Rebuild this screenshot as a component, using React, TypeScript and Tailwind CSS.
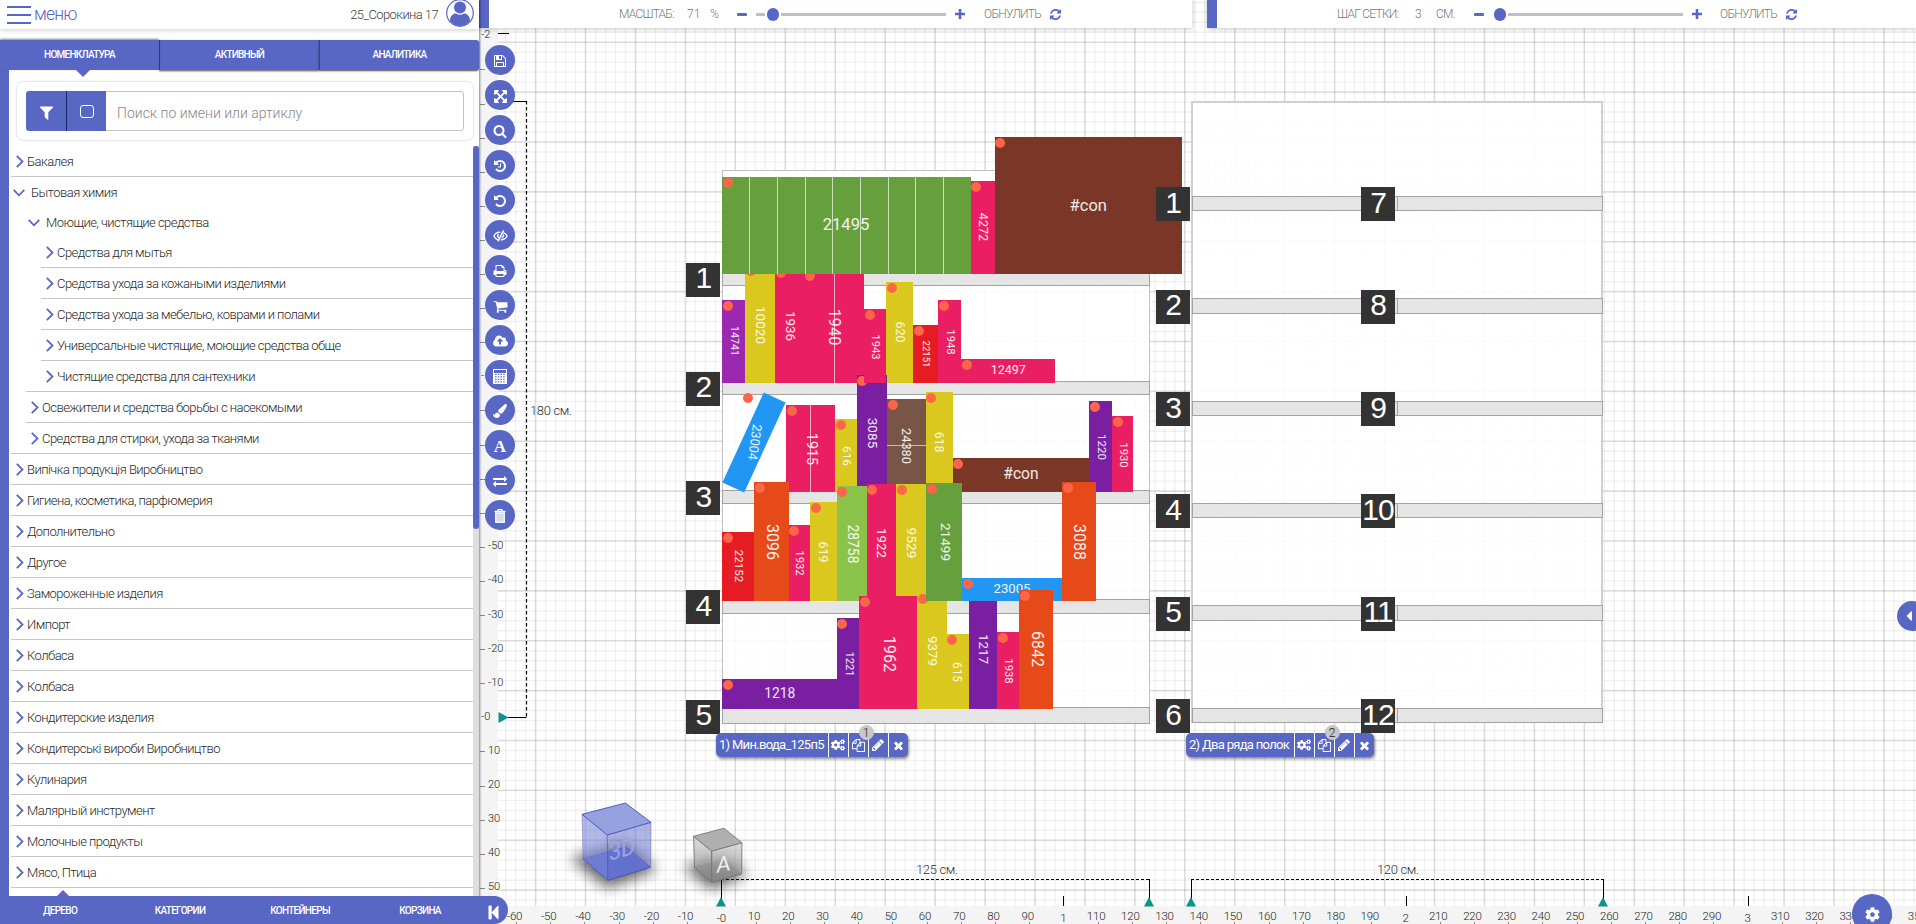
import React from "react";
import { FaCogs, FaPaintBrush, FaCog, FaCaretLeft } from "react-icons/fa";

type IconProps = { d: string; size?: number; vb?: string };
const Icon = ({ d, size = 14, vb = "0 0 1792 1792" }: IconProps) => (
  <svg width={size} height={size} viewBox={vb} fill="currentColor" className="shrink-0">
    <path d={d} />
  </svg>
);

const UNDO =
  "M1664 896q0 156-61 298t-164 245-245 164-298 61q-172 0-327-72.5t-264-204.5q-7-10-6.5-22.5t8.5-20.5l137-138q10-9 25-9 16 2 23 12 73 95 179 147t225 52q104 0 198.5-40.5t163.5-109.5 109.5-163.5 40.5-198.5-40.5-198.5-109.5-163.5-163.5-109.5-198.5-40.5q-98 0-188 35.5t-160 101.5l137 138q31 30 14 69-17 40-59 40h-448q-26 0-45-19t-19-45v-448q0-42 40-59 39-17 69 14l130 129q107-101 244.5-156.5t284.5-55.5q156 0 298 61t245 164 164 245 61 298z";
const P = {
  save: "M512 1536h768v-384h-768v384zm896 0h128v-896q0-14-10-38.5t-20-34.5l-281-281q-10-10-34-20t-39-10v416q0 40-28 68t-68 28h-576q-40 0-68-28t-28-68v-416h-128v1280h128v-416q0-40 28-68t68-28h832q40 0 68 28t28 68v416zm-384-928v-320q0-13-9.5-22.5t-22.5-9.5h-192q-13 0-22.5 9.5t-9.5 22.5v320q0 13 9.5 22.5t22.5 9.5h192q13 0 22.5-9.5t9.5-22.5zm640 32v928q0 40-28 68t-68 28h-1344q-40 0-68-28t-28-68v-1344q0-40 28-68t68-28h928q40 0 88 20t76 48l280 280q28 28 48 76t20 88z",
  arrows: "M1411 541l-355 355 355 355 144-144q29-31 70-14 39 17 39 59v448q0 26-19 45t-45 19h-448q-42 0-59-40-17-39 14-69l144-144-355-355-355 355 144 144q31 30 14 69-17 40-59 40h-448q-26 0-45-19t-19-45v-448q0-42 40-59 39-17 69 14l144 144 355-355-355-355-144 144q-19 19-45 19-12 0-24-5-40-17-40-59v-448q0-26 19-45t45-19h448q42 0 59 40 17 39-14 69l-144 144 355 355 355-355-144-144q-31-30-14-69 17-40 59-40h448q26 0 45 19t19 45v448q0 42-39 59-13 5-25 5-26 0-45-19z",
  search: "M1216 832q0-185-131.5-316.5t-316.5-131.5-316.5 131.5-131.5 316.5 131.5 316.5 316.5 131.5 316.5-131.5 131.5-316.5zm512 832q0 52-38 90t-90 38q-54 0-90-38l-343-342q-179 124-399 124-143 0-273.5-55.5t-225-150-150-225-55.5-273.5 55.5-273.5 150-225 225-150 273.5-55.5 273.5 55.5 225 150 150 225 55.5 273.5q0 220-124 399l343 343q37 37 37 90z",
  undo: UNDO,
  history: UNDO + "M1024 608v448q0 14-9 23t-23 9h-320q-14 0-23-9t-9-23v-64q0-14 9-23t23-9h224v-352q0-14 9-23t23-9h64q14 0 23 9t9 23z",
  print: "M448 1536h896v-256h-896v256zm0-640h896v-384h-160q-40 0-68-28t-28-68v-160h-640v640zm1152 64q0-26-19-45t-45-19-45 19-19 45 19 45 45 19 45-19 19-45zm128 0v416q0 13-9.5 22.5t-22.5 9.5h-224v160q0 40-28 68t-68 28h-960q-40 0-68-28t-28-68v-160h-224q-13 0-22.5-9.5t-9.5-22.5v-416q0-79 56.5-135.5t135.5-56.5h64v-544q0-40 28-68t68-28h672q40 0 88 20t76 48l152 152q28 28 48 76t20 88v256h64q79 0 135.5 56.5t56.5 135.5z",
  cart: "M704 1536q0 52-38 90t-90 38-90-38-38-90 38-90 90-38 90 38 38 90zm896 0q0 52-38 90t-90 38-90-38-38-90 38-90 90-38 90 38 38 90zm128-1088v512q0 24-16.5 42.5t-40.5 21.5l-1044 122q13 60 13 70 0 16-24 64h920q26 0 45 19t19 45-19 45-45 19h-1024q-26 0-45-19t-19-45q0-11 8-31.5t16-36 21.5-40 15.5-29.5l-177-823h-204q-26 0-45-19t-19-45 19-45 45-19h256q16 0 28.5 6.5t19.5 15.5 13 24.5 8 26 5.5 29.5 4.5 26h1201q26 0 45 19t19 45z",
  cloud: "M1280 864q0-14-9-23l-352-352q-9-9-23-9t-23 9l-351 351q-10 12-10 24 0 14 9 23t23 9h224v352q0 13 9.5 22.5t22.5 9.5h192q13 0 22.5-9.5t9.5-22.5v-352h224q13 0 22.5-9.5t9.5-22.5zm640 288q0 159-112.5 271.5t-271.5 112.5h-1088q-185 0-316.5-131.5t-131.5-316.5q0-130 70-240t188-165q-2-30-2-43 0-212 150-362t362-150q156 0 285.5 87t188.5 231q71-62 166-62 106 0 181 75t75 181q0 76-41 138 130 31 213.5 135.5t83.5 238.5z",
  exchange: "M1792 1184v192q0 13-9.5 22.5t-22.5 9.5h-1376v192q0 13-9.5 22.5t-22.5 9.5q-12 0-24-10l-319-320q-9-9-9-22 0-14 9-23l320-320q9-9 23-9 13 0 22.5 9.5t9.5 22.5v192h1376q13 0 22.5 9.5t9.5 22.5zm0-544q0 14-9 23l-320 320q-9 9-23 9-13 0-22.5-9.5t-9.5-22.5v-192h-1376q-13 0-22.5-9.5t-9.5-22.5v-192q0-13 9.5-22.5t22.5-9.5h1376v-192q0-14 9-23t23-9q12 0 24 10l319 319q9 9 9 23z",
  filter: "M1595 295q17 41-14 70l-493 493v742q0 42-39 59-13 5-25 5-27 0-45-19l-256-256q-19-19-19-45v-486l-493-493q-31-29-14-70 17-39 59-39h1280q42 0 59 39z",
  refresh: "M1639 1056q0 5-1 7-64 268-268 434.5t-478 166.5q-146 0-282.5-55t-243.5-157l-129 129q-19 19-45 19t-45-19-19-45v-448q0-26 19-45t45-19h448q26 0 45 19t19 45-19 45l-137 137q71 66 161 102t187 36q134 0 250-65t186-179q11-17 53-117 8-23 30-23h192q13 0 22.5 9.5t9.5 22.5zm25-800v448q0 26-19 45t-45 19h-448q-26 0-45-19t-19-45 19-45l138-138q-148-137-349-137-134 0-250 65t-186 179q-11 17-53 117-8 23-30 23h-199q-13 0-22.5-9.5t-9.5-22.5v-7q65-268 270-434.5t480-166.5q146 0 284 55.5t245 156.5l130-129q19-19 45-19t45 19 19 45z",
  pencil: "M491 1536l91-91-235-235-91 91v107h128v128h107zm523-928q0-22-22-22-10 0-17 7l-542 542q-7 7-7 17 0 22 22 22 10 0 17-7l542-542q7-7 7-17zm-54-192l416 416-832 832h-416v-416zm683 96q0 53-37 90l-166 166-416-416 166-165q36-38 90-38 53 0 91 38l235 234q37 39 37 91z",
  times: "M1490 1322q0 40-28 68l-136 136q-28 28-68 28t-68-28l-294-294-294 294q-28 28-68 28t-68-28l-136-136q-28-28-28-68t28-68l294-294-294-294q-28-28-28-68t28-68l136-136q28-28 68-28t68 28l294 294 294-294q28-28 68-28t68 28l136 136q28 28 28 68t-28 68l-294 294 294 294q28 28 28 68z",
  copy: "M1696 384q40 0 68 28t28 68v1216q0 40-28 68t-68 28h-960q-40 0-68-28t-28-68v-288h-544q-40 0-68-28t-28-68v-672q0-40 20-88t48-76l408-408q28-28 76-48t88-20h416q40 0 68 28t28 68v328q68-40 128-40h416zm-544 213l-299 299h299v-299zm-640-384l-299 299h299v-299zm196 647l316-316v-416h-384v416q0 40-28 68t-68 28h-416v640h512v-256q0-40 20-88t48-76zm956 804v-1152h-384v416q0 40-28 68t-68 28h-416v640h896z",
};

const CalculatorIcon = () => (
  <svg width="14" height="15" viewBox="0 0 14 15">
    <rect x="0.5" y="0.5" width="13" height="14" fill="none" stroke="#fff" />
    <rect x="1" y="4" width="12" height="10" fill="#fff" />
    {[4.8, 7.3, 9.8, 12.3].map((y) =>
      [2, 4.7, 7.4, 10.1].map((x) => <rect key={`${x}-${y}`} x={x} y={y} width="1.6" height="1.1" fill="#5867c3" />)
    )}
  </svg>
);

const EyeIcon = () => (
  <svg width="15" height="12" viewBox="0 0 15 12" fill="none" stroke="#fff" strokeWidth="1.3" strokeLinecap="round">
    <path d="M6.8 2.2C3.800 2.300 1.800 4.200 0.900 6C1.500 7.500 2.800 8.900 4.600 9.700" />
    <path d="M10.800 2.800C12.500 3.600 13.600 4.900 14.100 6C13.200 7.900 11 9.800 8 9.900" />
    <path d="M10.200 0.900L5.200 11" strokeWidth="1.500" />
    <path d="M5.200 4.200C4.400 5.500 4.700 6.800 5.600 7.600M10.300 4.800C10.500 6.200 9.900 7.200 9.100 7.800" />
  </svg>
);

const TrashIcon = () => (
  <svg width="12" height="14" viewBox="0 0 12 14">
    <path d="M4 2V0.700H8V2" fill="none" stroke="#fff" strokeWidth="1.200" />
    <rect x="0.500" y="1.800" width="11" height="1.700" fill="#fff" />
    <rect x="1.700" y="4" width="8.600" height="9.300" fill="#d5d9f1" stroke="#fff" strokeWidth="1.200" />
  </svg>
);

const Header = () => (
  <header className="relative flex h-[29px] w-[479px] shrink-0 items-center justify-between bg-white pr-[5px] pl-[7px] shadow-[0_1px_5px_rgba(0,0,0,0.2)]">
    <div className="flex items-center gap-[3px]">
      <span className="flex w-6 flex-col gap-[6px]">
        <i className="h-[2px] bg-[#5867c3]" />
        <i className="h-[2px] bg-[#5867c3]" />
        <i className="h-[2px] bg-[#5867c3]" />
      </span>
      <span className="pb-px text-[17.500px] leading-[24px] font-light tracking-[-0.8px] text-[#5867c3]">меню</span>
    </div>
    <div className="flex items-center gap-[8px]">
      <span className="text-[13px] font-light tracking-[-0.6px] text-[#444]">25_Сорокина 17</span>
      <svg width="28" height="28" viewBox="0 0 28 28" className="-mt-1">
        <circle cx="14" cy="14" r="13.300" fill="#fff" stroke="#5867c3" strokeWidth="1.200" />
        <circle cx="14" cy="8.500" r="6" fill="#5867c3" />
        <path d="M4 22C4 16 8 14.500 10 14.500Q14 17 18 14.500C21 14.500 24 17 24 22Q20 27 14 27Q8 27 4 22Z" fill="#5867c3" />
      </svg>
    </div>
  </header>
);

const Tabs = () => (
  <nav className="relative mt-[11px] flex h-[30px] shrink-0 text-[10px] font-medium tracking-[-0.75px] text-white">
    <div className="relative flex flex-1 items-center justify-center bg-[#5867c3] pb-px shadow-[0_-1px_2px_rgba(0,0,0,0.5)]">
      НОМЕНКЛАТУРА
      <i className="absolute top-[30px] left-[76px] h-0 w-0 border-x-[7px] border-t-[7px] border-x-transparent border-t-[#5867c3]" />
    </div>
    <div className="flex flex-1 items-center justify-center border-l border-[#38448f] bg-[#5867c3] pb-px shadow-[0_1px_2px_rgba(0,0,0,0.7)]">АКТИВНЫЙ</div>
    <div className="flex flex-1 items-center justify-center rounded-r-[3px] border-l border-[#38448f] bg-[#5867c3] pb-px shadow-[0_1px_2px_rgba(0,0,0,0.7)]">АНАЛИТИКА</div>
  </nav>
);

const Search = () => (
  <div className="mt-[11px] ml-[7px] mr-[5px] shrink-0 rounded-lg border border-[#e8e8e8] p-[9px] shadow-[0_0_3px_rgba(0,0,0,0.08)]">
    <div className="flex h-10 overflow-hidden rounded-[3px]">
      <div className="flex w-[41px] items-center justify-center border-r border-[#1b2566] bg-[#5867c3] pt-[3px] text-white">
        <Icon d={P.filter} size={17} />
      </div>
      <div className="flex w-[39px] items-center justify-center bg-[#5867c3]">
        <i className="h-[13px] w-[14px] rounded-[3px] border-[1.5px] border-white" />
      </div>
      <div className="flex flex-1 items-center rounded-r-[3px] border border-l-0 border-[#c4c4c4] pt-1 pl-[11px] text-[14px] font-light text-[#888]">
        Поиск по имени или артиклу
      </div>
    </div>
  </div>
);

type Row = { t: string; l: 0 | 1 | 2; open?: boolean; lineAt?: 0 | 1 | 2 };
const ROWS: Row[] = [
  { t: "Бакалея", l: 0 },
  { t: "Бытовая химия", l: 0, open: true },
  { t: "Моющие, чистящие средства", l: 1, open: true },
  { t: "Средства для мытья", l: 2 },
  { t: "Средства ухода за кожаными изделиями", l: 2 },
  { t: "Средства ухода за мебелью, коврами и полами", l: 2 },
  { t: "Универсальные чистящие, моющие средства обще", l: 2 },
  { t: "Чистящие средства для сантехники", l: 2, lineAt: 1 },
  { t: "Освежители и средства борьбы с насекомыми", l: 1 },
  { t: "Средства для стирки, ухода за тканями", l: 1, lineAt: 0 },
  { t: "Випічка продукція Виробництво", l: 0 },
  { t: "Гигиена, косметика, парфюмерия", l: 0 },
  { t: "Дополнительно", l: 0 },
  { t: "Другое", l: 0 },
  { t: "Замороженные изделия", l: 0 },
  { t: "Импорт", l: 0 },
  { t: "Колбаса", l: 0 },
  { t: "Колбаса", l: 0 },
  { t: "Кондитерские изделия", l: 0 },
  { t: "Кондитерські вироби Виробництво", l: 0 },
  { t: "Кулинария", l: 0 },
  { t: "Малярный инструмент", l: 0 },
  { t: "Молочные продукты", l: 0 },
  { t: "Мясо, Птица", l: 0 },
];
const LINE_PAD = ["pl-0", "pl-[15px]", "pl-[30px]"];

const Tree = () => (
  <div className="mt-[5px] ml-[2px] flex min-h-0 flex-1">
    <ul className="flex min-w-0 flex-1 flex-col overflow-hidden">
      {ROWS.map((r, i) => (
        <li key={i} className={LINE_PAD[r.lineAt ?? r.l]}>
          <div className={r.open ? "h-[30px]" : "h-[31px] border-b border-[#c6c6c6]"}>
            <div className={`flex h-[31px] items-center whitespace-nowrap ${r.lineAt !== undefined ? "ml-[15px]" : "ml-0"}`}>
              {r.open ? (
                <svg width="12" height="8" viewBox="0 0 12 8" fill="none" stroke="#5867c3" strokeWidth="1.800" className="mr-[6px] ml-[2px]">
                  <path d="M0.700 0.800L6 6.300L11.300 0.800" />
                </svg>
              ) : (
                <svg width="8" height="13" viewBox="0 0 8 13" fill="none" stroke="#5867c3" strokeWidth="1.800" className="mr-[3px] ml-[5px]">
                  <path d="M0.800 0.800L6.500 6.500L0.800 12.200" />
                </svg>
              )}
              <span className="text-[13px] font-light tracking-[-0.54px] text-[#2a2a2a]">{r.t}</span>
            </div>
          </div>
        </li>
      ))}
    </ul>
    <div className="h-full w-[6px] shrink-0 bg-[#dedede]">
      <div className="h-[383px] rounded-[3px] bg-[#5867c3]" />
    </div>
  </div>
);

const Sidebar = () => (
  <aside className="relative z-10 flex w-[479px] shrink-0 flex-col bg-white shadow-[1px_0_2px_rgba(0,0,0,0.45)]">
    <Header />
    <Tabs />
    <div className="flex min-h-0 flex-1 flex-col border-l-[9px] border-[#5867c3]">
      <Search />
      <Tree />
    </div>
    <footer className="relative flex h-7 w-[508px] shrink-0 items-center rounded-r-[14px] bg-[#5867c3] text-[10px] font-medium tracking-[-0.7px] text-white">
      <i className="absolute -top-[6px] left-[57px] h-0 w-0 border-x-[6px] border-b-[6px] border-x-transparent border-b-[#5867c3]" />
      {["ДЕРЕВО", "КАТЕГОРИИ", "КОНТЕЙНЕРЫ", "КОРЗИНА"].map((t) => (
        <span key={t} className="w-[120px] text-center">{t}</span>
      ))}
      <svg width="11" height="15" viewBox="0 0 11 15" fill="#fff" className="mt-1 ml-2">
        <rect x="0.500" y="0.500" width="3.200" height="14" rx="1" />
        <path d="M10.500 1.200V13.800Q10.300 14.800 9.500 14L3.500 7.500L9.500 1Q10.300 0.200 10.500 1.200Z" />
      </svg>
    </footer>
  </aside>
);

const Thumb = ({ lead }: { lead: number }) => (
  <div className="flex h-4 items-center gap-[2px]">
    {lead > 0 && <i className="h-[3px] w-[9px] bg-[#bdc1c6]" />}
    <i className="h-[13px] w-[12px] rounded-full bg-[#5867c3]" />
  </div>
);
const Minus = () => <i className="h-[3px] w-[10px] rounded-[1px] bg-[#5867c3]" />;
const Plus = () => (
  <svg width="10" height="10" viewBox="0 0 10 10" stroke="#5867c3" strokeWidth="2.600">
    <path d="M5 0V10M0 5H10" />
  </svg>
);

const TopBars = () => (
  <div className="absolute top-0 left-[479px] flex h-[28px] w-[1437px] gap-[15px] text-[12px] leading-none font-light tracking-[-0.75px] text-[#777]">
    <div className="flex w-[713px] items-center border-l-[10px] border-[#5867c3] bg-white shadow-[0_1px_5px_rgba(0,0,0,0.22)]">
      <span className="ml-[130px] w-[68px]">МАСШТАБ:</span>
      <span className="w-[23px] tracking-normal">71</span>
      <span className="w-[27px]">%</span>
      <Minus />
      <div className="ml-[9px] flex items-center gap-[2px]">
        <Thumb lead={9} />
        <i className="h-[3px] w-[165px] bg-[#bdc1c6]" />
      </div>
      <div className="ml-[9px]"><Plus /></div>
      <span className="ml-[19px] w-[65px]">ОБНУЛИТЬ</span>
      <span className="text-[#5867c3]"><Icon d={P.refresh} size={13} /></span>
    </div>
    <div className="flex flex-1 items-center border-l-[10px] border-[#5867c3] bg-white shadow-[0_1px_5px_rgba(0,0,0,0.22)]">
      <span className="ml-[120px] w-[78px]">ШАГ СЕТКИ:</span>
      <span className="w-[21px]">3</span>
      <span className="w-[38px]">СМ.</span>
      <Minus />
      <div className="ml-[10px] flex items-center gap-[2px]">
        <Thumb lead={0} />
        <i className="h-[3px] w-[175px] bg-[#bdc1c6]" />
      </div>
      <div className="ml-[9px]"><Plus /></div>
      <span className="ml-[18px] w-[65px]">ОБНУЛИТЬ</span>
      <span className="text-[#5867c3]"><Icon d={P.refresh} size={13} /></span>
    </div>
  </div>
);

const TOOLS: React.ReactNode[] = [
  <Icon d={P.save} />,
  <Icon d={P.arrows} size={15} />,
  <Icon d={P.search} />,
  <Icon d={P.history} />,
  <Icon d={P.undo} />,
  <EyeIcon />,
  <Icon d={P.print} />,
  <Icon d={P.cart} size={15} />,
  <Icon d={P.cloud} vb="0 0 1920 1792" size={15} />,
  <CalculatorIcon />,
  <FaPaintBrush size={14} />,
  <span className="font-['Liberation_Serif',serif] text-[17px] leading-none font-bold">A</span>,
  <Icon d={P.exchange} />,
  <TrashIcon />,
];

const Tools = () => (
  <div className="absolute top-[45px] left-[485px] z-20 flex flex-col gap-[5px]">
    {TOOLS.map((t, i) => (
      <div key={i} className="flex h-[30px] w-[30px] items-center justify-center rounded-full bg-[#5867c3] pt-[2px] text-white">{t}</div>
    ))}
  </div>
);

/* --- drawing surface ------------------------------------------------ */

const GX = 49.94;
const GY = 49.88;
const range = (a: number, b: number) => Array.from({ length: b - a + 1 }, (_, i) => a + i);

const Grid = () => (
  <svg className="absolute top-0 left-0" width="1916" height="924" shapeRendering="auto">
    {range(-3, 138).map((i) => {
      const x = 535.600 + (i * GX) / 5;
      return <line key={`a${i}`} x1={x} x2={x} y1="0" y2="906" stroke="#000" strokeOpacity="0.055" strokeWidth="1.400" />;
    })}
    {range(-4, 86).map((i) => {
      const y = 42.200 + (i * GY) / 5;
      return <line key={`b${i}`} y1={y} y2={y} x1="498" x2="1916" stroke="#000" strokeOpacity="0.055" strokeWidth="1.400" />;
    })}
    {range(0, 27).map((i) => {
      const x = 535.600 + i * GX;
      return <line key={`c${i}`} x1={x} x2={x} y1="0" y2="906" stroke="#000" strokeOpacity="0.090" strokeWidth="1.600" />;
    })}
    {range(0, 17).map((i) => {
      const y = 42.200 + i * GY;
      return <line key={`d${i}`} y1={y} y2={y} x1="498" x2="1916" stroke="#000" strokeOpacity="0.090" strokeWidth="1.600" />;
    })}
  </svg>
);

const Rulers = () => (
  <>
    <div className="absolute top-0 left-[479px] h-[924px] w-[19px] bg-[#f4f4f4]" />
    <div className="absolute top-[906px] left-[479px] h-[18px] w-[1437px] bg-[#f4f4f4]" />
    {range(-20, 5).map((k) => {
      const y = 717.300 + k * 34.100;
      const big = k % 10 === 0;
      const label = k === -20 ? "-2" : k === -10 ? "-" : k === 0 ? "-0" : String(k * 10);
      return (
        <React.Fragment key={k}>
          {!big && <i className="absolute left-[480px] h-px w-[5px] bg-[#888]" style={{ top: y }} />}
          {(big || k >= -5) && (
            <span className="absolute text-[11px] leading-[14px] font-light text-[#222]" style={{ top: y - 7.500, left: big ? 481 : 488 }}>
              {label}
            </span>
          )}
        </React.Fragment>
      );
    })}
    <i className="absolute top-[33px] left-[498px] h-px w-[11px] bg-black" />
    {range(-6, 35).map((k) => {
      const x = 721.300 + k * 34.210;
      const big = k % 10 === 0;
      const label = k === 0 ? "-0" : big ? String(k / 10) : String(k * 10);
      return (
        <React.Fragment key={k}>
          {!big && <i className="absolute top-[922px] h-[2px] w-px bg-[#888]" style={{ left: x }} />}
          {big && k > 0 && <i className="absolute top-[896px] h-[10px] w-px bg-black" style={{ left: x }} />}
          <span
            className="absolute w-10 text-center text-[11.500px] leading-[14px] font-light tracking-[-0.2px] text-[#222]"
            style={{ top: big ? 911 : 909, left: x - (big ? 20 : 21.500) }}
          >
            {label}
          </span>
        </React.Fragment>
      );
    })}
  </>
);

const Dims = () => (
  <>
    <svg className="absolute top-0 left-0" width="1916" height="924" fill="none" stroke="#000">
      <path d="M498 101.500H526.500" />
      <path d="M526.500 101V717" strokeDasharray="3.500 2.500" strokeWidth="1.200" />
      <path d="M504 717.500H526.500" />
      <path d="M721.500 900V879.500M1149.500 879V900M1191.500 900V879M1603.500 879V900" />
      <path d="M721 879.500H1149.500M1191 879.500H1603.500" strokeDasharray="3 2" strokeWidth="1.200" />
      <g fill="#0d9488" stroke="none">
        <path d="M498.500 712L508.500 717.500L498.500 723Z" />
        <path d="M716 906.500L721 897L726 906.500Z" />
        <path d="M1144 906.500L1149 897L1154 906.500Z" />
        <path d="M1186 906.500L1191 897L1196 906.500Z" />
        <path d="M1598 906.500L1603 897L1608 906.500Z" />
      </g>
    </svg>
    <span className="absolute top-[402px] left-[530px] text-[13px] leading-[18px] font-light tracking-[-0.35px] text-[#333]">180 см.</span>
    <span className="absolute top-[861px] left-[916px] text-[13px] leading-[18px] font-light tracking-[-0.35px] text-[#333]">125 см.</span>
    <span className="absolute top-[861px] left-[1377px] text-[13px] leading-[18px] font-light tracking-[-0.35px] text-[#333]">120 см.</span>
  </>
);

const Shelf = ({ x, y, w, h }: { x: number; y: number; w: number; h: number }) => (
  <div className="absolute border border-[#a2a2a2] bg-[#e5e5e5]" style={{ left: x, top: y, width: w, height: h }} />
);
const Num = ({ x, y, n }: { x: number; y: number; n: number }) => (
  <div
    className="absolute flex h-[34px] w-[34px] items-center justify-center bg-[#333] pb-[3px] font-['Liberation_Sans',sans-serif] text-[30px] leading-none tracking-[-1px] text-white"
    style={{ left: x, top: y }}
  >
    {n}
  </div>
);

const PINK = "#ea1e63", YEL = "#dac81e", PUR = "#7b1fa2", LIL = "#9c27b0", GRN = "#66a03c", BRN = "#7a3626";
const RED = "#e51c23", ORG = "#e64a19", BLU = "#2196f3", LIM = "#8bc34a", TAU = "#795548";

type Box = { n: string; c: string; x: number; y: number; r: number; b: number; tx: number; ty: number; s: number; v?: boolean; div?: number[]; hdiv?: number };
const box = (n: string, c: string, x: number, y: number, r: number, b: number, tx: number, ty: number, s: number, v = true, div?: number[], hdiv?: number): Box => ({ n, c, x, y, r, b, tx, ty, s, v, div, hdiv });

/* painted back to front */
const BOXES: Box[] = [
  box("14741", LIL, 722, 300.3, 745, 383, 733.7, 341.3, 10.7),
  box("10020", YEL, 745, 265, 775, 383, 760, 325, 13.6),
  box("1936", PINK, 775, 267, 804.5, 383, 790, 326, 13.4),
  box("1940", PINK, 804.3, 269.5, 864.2, 383, 834.5, 326.7, 16.3, true, [834]),
  box("620", YEL, 886.3, 282.3, 913.3, 383, 899.7, 332.3, 12.5),
  box("22151", RED, 913.3, 325, 938.3, 383, 926, 353.7, 9.6),
  box("1948", PINK, 938.3, 300.3, 961, 383, 950.3, 342, 11.3),
  box("12497", PINK, 961, 358.7, 1055.3, 383, 1008.3, 370.3, 12.5, false),
  box("21495", GRN, 722, 176.7, 970.7, 273.7, 846, 224.7, 16.6, false, [749, 777, 804.5, 832, 860, 887.5, 915, 943]),
  box("4272", PINK, 970.7, 180.7, 994.7, 273.7, 983, 227.3, 12.6),
  box("#con", BRN, 994.7, 137.3, 1182.3, 273.7, 1088.3, 206, 16.5, false),
  box("1915", PINK, 786, 405, 835, 492, 810.7, 449, 14.4, true, [810]),
  box("616", YEL, 835, 418.7, 856.7, 492, 846, 455.7, 11.8),
  box("3085", PUR, 856.7, 374.7, 887, 492, 872.3, 433.3, 13.6),
  box("1943", PINK, 864, 309.3, 886.3, 383, 875.3, 346.7, 11.3),
  box("24380", TAU, 887, 398.7, 925.7, 492, 906.3, 446, 12.8, true, undefined, 445),
  box("618", YEL, 925.7, 392, 952.7, 492, 939, 442.3, 12.3),
  box("#con", BRN, 952.7, 458, 1089.3, 492, 1021, 474.7, 15.6, false),
  box("1220", PUR, 1089.3, 401.3, 1112, 492, 1101.3, 447, 11.5),
  box("1930", PINK, 1112, 416, 1133.3, 492, 1123, 454.7, 11.3),
  box("22152", RED, 722, 531.7, 754.3, 601.3, 738.3, 566.3, 11.5),
  box("3096", ORG, 754.3, 482, 788.7, 601.3, 772, 542, 16),
  box("1932", PINK, 788.7, 524.7, 810, 601.3, 799.3, 563.3, 11.3),
  box("619", YEL, 810, 501.7, 836.7, 601.3, 823.3, 551.7, 12.6),
  box("28758", LIM, 836.7, 486, 866.7, 601.3, 852.3, 543.7, 13.8),
  box("1922", PINK, 866.7, 484, 896.3, 601.3, 881.3, 543, 13.3),
  box("9529", YEL, 896.3, 484.3, 926.3, 601.3, 911, 543, 13.7),
  box("1221", PUR, 836.7, 618, 859.3, 708.7, 848.7, 663.7, 11.2),
  box("1962", PINK, 859.3, 596.3, 917.3, 708.7, 889.3, 654, 16),
  box("9379", YEL, 917.3, 592.7, 946.7, 708.7, 932, 650.7, 13.4),
  box("615", YEL, 946.7, 634.3, 968.7, 708.7, 957.3, 672.3, 12),
  box("1217", PUR, 968.7, 588, 997.3, 708.7, 983, 649.3, 13.4),
  box("1938", PINK, 997.3, 632, 1019.3, 708.7, 1008, 670.7, 11.3),
  box("21499", GRN, 926.3, 482.7, 962, 601.3, 944.7, 542, 13.6),
  box("23005", BLU, 962, 577.7, 1062, 601.3, 1012, 589.3, 13.2, false),
  box("3088", ORG, 1062, 482, 1096, 601.3, 1079.3, 541.7, 16),
  box("1218", PUR, 722, 678.7, 836.7, 708.7, 779.7, 693.7, 13.8, false),
  box("6842", ORG, 1019.3, 589.7, 1053.3, 708.7, 1036.7, 649.3, 16),
];

const BoxView = ({ b }: { b: Box }) => (
  <div className="absolute" style={{ left: b.x, top: b.y, width: b.r - b.x, height: b.b - b.y, background: b.c }}>
    <span
      className="absolute leading-none whitespace-nowrap text-white/90"
      style={{ left: b.tx - b.x, top: b.ty - b.y, fontSize: b.s, transform: `translate(-50%,-50%)${b.v ? " rotate(90deg)" : ""}` }}
    >
      {b.n}
    </span>
    {b.div?.map((d) => <i key={d} className="absolute top-0 h-full w-px bg-white/65" style={{ left: d - b.x }} />)}
    {b.hdiv && <i className="absolute left-0 h-px w-full bg-white/60" style={{ top: b.hdiv - b.y }} />}
    <i className="absolute top-[1px] left-[0.500px] h-[10px] w-[10px] rounded-full bg-[#ff6549]" />
  </div>
);

const RackTag = ({ x, w, text, n }: { x: number; w: number; text: string; n: number }) => (
  <div
    className="absolute top-[733px] flex h-6 items-stretch rounded-[5px] bg-[#5867c3] text-white shadow-[1px_2px_3px_rgba(0,0,0,0.45)]"
    style={{ left: x, width: w }}
  >
    <span className="flex min-w-0 flex-1 items-center pl-[3px] text-[13px] tracking-[-0.7px] whitespace-nowrap">{text}</span>
    <span className="flex w-5 shrink-0 items-center justify-center border-l border-white"><FaCogs size={14} /></span>
    <span className="flex w-5 shrink-0 items-center justify-center border-l border-white"><Icon d={P.copy} size={13} /></span>
    <span className="flex w-5 shrink-0 items-center justify-center border-l border-white"><Icon d={P.pencil} size={14} /></span>
    <span className="flex w-5 shrink-0 items-center justify-center border-l border-white"><Icon d={P.times} size={13} /></span>
    <span className="absolute -top-[8px] right-[34px] flex h-[15px] w-[15px] items-center justify-center rounded-full bg-[#c8c8c8] text-[12px] leading-none font-light text-[#222]">{n}</span>
  </div>
);

const Cubes = () => (
  <svg className="absolute top-[780px] left-[550px]" width="220" height="126" viewBox="550 780 220 126">
    <defs>
      <filter id="soft" x="-50%" y="-50%" width="200%" height="200%"><feGaussianBlur stdDeviation="7" /></filter>
      <linearGradient id="grayside" x1="0" y1="0" x2="0" y2="1">
        <stop offset="0" stopColor="#ccc" stopOpacity="0.850" />
        <stop offset="1" stopColor="#888" stopOpacity="0.850" />
      </linearGradient>
    </defs>
    <path d="M570 858L607 888L657 870L626 843Z" fill="#000" opacity="0.600" filter="url(#soft)" />
    <path d="M683 867L711 889L748 875L724 856Z" fill="#000" opacity="0.600" filter="url(#soft)" />
    <g stroke="#4654b4" strokeWidth="0.900" strokeLinejoin="round">
      <path d="M583 858.700L607.800 880.300L650.700 867.300L626.300 847Z" fill="#5867d3" fillOpacity="0.900" />
      <path d="M582 814.300L583 858.700L607.800 880.300L607.300 835Z" fill="#7f8bdc" fillOpacity="0.600" strokeOpacity="0.400" />
      <path d="M607.300 835L607.800 880.300L650.700 867.300L651 822.300Z" fill="#6c78cf" fillOpacity="0.550" strokeOpacity="0.500" />
      <path d="M582 814.300L625.400 803L651 822.300L607.300 835Z" fill="#8b97dc" fillOpacity="0.900" />
    </g>
    <text transform="matrix(0.980,-0.280,0,1.080,609,861)" fontFamily="Roboto, sans-serif" fontSize="22" fill="#9ba6e4">3D</text>
    <g stroke="#777" strokeWidth="0.900" strokeLinejoin="round">
      <path d="M694.500 867.300L711.700 882.300L741.600 873.700L724 859.700Z" fill="#777" fillOpacity="0.700" />
      <path d="M693.600 836.300L694.500 867.300L711.700 882.300L711.700 851Z" fill="url(#grayside)" fillOpacity="0.800" />
      <path d="M711.700 851V882.300L741.600 873.700L742 842.700Z" fill="url(#grayside)" fillOpacity="0.800" />
      <path d="M693.600 836.300L724 828.300L742 842.700L711.700 851Z" fill="#b0b0b0" />
    </g>
    <text transform="matrix(0.980,-0.200,-0.050,1,716,873)" fontFamily="Roboto, sans-serif" fontSize="22" fill="#eee">A</text>
  </svg>
);

const LEFT_SHELVES = [[272, 14], [381.3, 14.2], [490.3, 14.2], [599.3, 14.4], [706.7, 17.6]];
const LEFT_NUMS = [262.5, 371.800, 481, 590.300, 699.500];

const Canvas = () => (
  <main className="absolute inset-0 overflow-hidden bg-white">
    <Grid />
    <Rulers />
    <div className="absolute top-[170px] left-[722px] h-[554px] w-[428px] border border-[#c0c0c0] bg-white/90" />
    {LEFT_SHELVES.map(([y, h], i) => <Shelf key={i} x={722} y={y} w={428} h={h} />)}
    <div className="absolute top-[101px] left-[1191px] h-[622px] w-[412px] border-2 border-[#d0d0d0] bg-white/90" />
    {range(0, 5).map((i) => (
      <React.Fragment key={i}>
        <Shelf x={1191.500} y={196 + i * 102.350} w={206} h={15.300} />
        <Shelf x={1397} y={196 + i * 102.350} w={205.500} h={15.300} />
      </React.Fragment>
    ))}
    <div className="absolute h-[99px] w-[24px] rotate-[24.700deg] bg-[#2196f3]" style={{ left: 741.700, top: 392.700 }} />
    <i className="absolute top-[393px] left-[742.500px] h-[10px] w-[10px] rounded-full bg-[#ff6549]" />
    <span className="absolute text-[12.800px] leading-none text-white/90" style={{ left: 753.700, top: 442.200, transform: "translate(-50%,-50%) rotate(98deg)" }}>23004</span>
    {BOXES.map((b, i) => <BoxView key={i} b={b} />)}
    {LEFT_NUMS.map((y, i) => <Num key={i} x={686.400} y={y} n={i + 1} />)}
    {range(0, 5).map((i) => (
      <React.Fragment key={i}>
        <Num x={1156} y={187.400 + i * 102.350} n={i + 1} />
        <Num x={1361} y={187.400 + i * 102.350} n={i + 7} />
      </React.Fragment>
    ))}
    <RackTag x={716} w={191.500} text="1) Мин.вода_125п5" n={1} />
    <RackTag x={1186} w={187.500} text="2) Два ряда полок" n={2} />
    <Dims />
    <Cubes />
    <div className="absolute top-[601px] left-[1897px] flex h-[30px] w-[30px] items-center rounded-full bg-[#5867c3] pl-1 text-white">
      <FaCaretLeft size={16} />
    </div>
    <div className="absolute top-[894px] left-[1852px] flex h-10 w-10 items-center justify-center rounded-full bg-[#5867c3] text-white">
      <FaCog size={15} />
    </div>
  </main>
);

export default function App() {
  return (
    <div className="relative flex h-[924px] w-[1916px] overflow-hidden bg-white font-['Roboto',sans-serif]">
      <Canvas />
      <TopBars />
      <Sidebar />
      <Tools />
    </div>
  );
}
